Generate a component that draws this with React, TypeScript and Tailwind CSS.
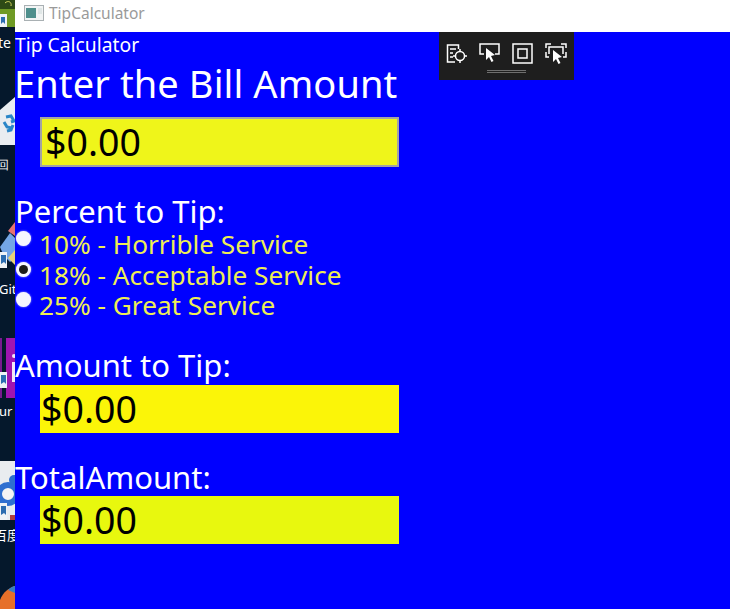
const font = "font-['Noto_Sans','Open_Sans',sans-serif]";

function Radio({ checked, label }: { checked?: boolean; label: string }) {
  return (
    <div className="flex h-[30.5px] items-start">
      <div className="mt-[1px] ml-[1px] flex h-[15px] w-[15px] shrink-0 items-center justify-center rounded-full bg-[#f6f6ff] shadow-[0_0_2px_#c8c8ff]">
        {checked && <div className="h-[9px] w-[9px] rounded-full bg-[#1c1c1c]" />}
      </div>
      <span className="ml-[8px] text-[26.2px] leading-[28px] text-[#eeee55] whitespace-nowrap">{label}</span>
    </div>
  );
}

function Field({ bg, border, h }: { bg: string; border?: boolean; h: string }) {
  return (
    <div className={`ml-[25px] flex w-[359px] items-center ${h} ${bg} ${border ? "border-2 border-[#a3a3a3] pl-[3px]" : "pl-[1px]"}`}>
      <span className="text-[37.5px] leading-none text-black">$0.00</span>
    </div>
  );
}

function Desktop() {
  return (
    <div className="relative h-full w-[15px] shrink-0 overflow-hidden bg-[#05182c] text-white">
      <svg width="15" height="609" viewBox="0 0 15 609" className="absolute left-0 top-0">
        <rect width="15" height="27" fill="#6f9a24" />
        <rect width="15" height="9" fill="#2d4a16" />
        <path d="M5 3c3-3 7-1 6 3" fill="none" stroke="#d8d860" strokeWidth="1" />
        <rect y="14" width="7" height="13" fill="#eef2f6" />
        <path d="M1 17h4v7l-2-2-2 2z" fill="#2b6cb0" />

        <path d="M0 110l15-13v48H0z" fill="#e9edf1" />
        <path d="M6 117l5-1 3 5-3 1M4 122l3 5 5 1M13 125l-2 5-4 1" fill="none" stroke="#2a86c8" strokeWidth="3" />

        <path d="M8 231l7-9v14z" fill="#e57373" />
        <path d="M0 247l10-14 5 5v20l-5 4-6-6z" fill="#74a6e6" />
        <path d="M8 258l7-8v15z" fill="#ead27a" />
        <rect y="252" width="7" height="16" fill="#eef2f6" />
        <path d="M1 255h5v9l-2-2-3 2z" fill="#2b6cb0" />

        <rect y="338" width="2" height="60" fill="#7a1a90" />
        <rect x="6" y="338" width="9" height="60" fill="#a015b0" />
        <rect x="12" y="362" width="3" height="20" fill="#f2e8f6" />
        <circle cx="14" cy="356" r="2" fill="#f2e8f6" />
        <rect y="372" width="7" height="16" fill="#eef2f6" />
        <path d="M1 375h5v9l-2-2-3 2z" fill="#2b6cb0" />

        <rect y="461" width="15" height="59" fill="#e9ecef" />
        <circle cx="8" cy="494" r="9" fill="#f4f4f4" stroke="#2e6fd0" strokeWidth="6" />
        <circle cx="14" cy="480" r="5" fill="#2e6fd0" />
        <rect x="10" y="515" width="5" height="5" fill="#b04040" />
        <rect y="503" width="7" height="17" fill="#eef2f6" />
        <path d="M1 506h5v9l-2-2-3 2z" fill="#2b6cb0" />

        <path d="M0 600c3-8 9-12 15-14v23H0z" fill="#e6702a" />
        <path d="M8 590c3-3 5-4 7-4v7z" fill="#3a7fc0" />
      </svg>
      <span className="absolute left-[-2px] top-[33px] text-[14px] leading-[20px]">te</span>
      <span className="absolute left-[-3px] top-[155px] text-[12px] leading-[20px] whitespace-nowrap">回</span>
      <span className="absolute left-[-1px] top-[279px] text-[13px] leading-[20px]">Git</span>
      <span className="absolute left-[-1px] top-[401px] text-[13px] leading-[20px]">ur</span>
      <span className="absolute left-[-6px] top-[525px] text-[13px] leading-[20px] whitespace-nowrap font-['Noto_Sans_CJK_SC',sans-serif]">百度</span>
    </div>
  );
}

export default function App() {
  return (
    <div className={`relative flex h-[609px] w-[730px] overflow-hidden bg-white ${font}`}>
      <Desktop />
      <div className="flex min-w-0 flex-1 flex-col">
        <div className="flex h-[32px] shrink-0 items-center bg-white pl-[9px]">
          <svg width="20" height="16" viewBox="0 0 20 16" className="mt-[-6px]">
            <rect x="0.5" y="0.5" width="19" height="15" fill="#f2f4f4" stroke="#a9b0b3" />
            <rect x="2" y="3" width="10" height="10" fill="#4f8f8c" />
            <rect x="14" y="3" width="4" height="6" fill="#dfe6e6" />
          </svg>
          <span className="ml-[5px] mt-[-4px] text-[15.5px] text-[#9a9a9a]">TipCalculator</span>
        </div>
        <div className="flex flex-1 flex-col bg-[#0000ff] text-white">
          <div className="h-[25px] text-[19.3px] leading-[25px] whitespace-nowrap">Tip Calculator</div>
          <div className="ml-[-1px] h-[60px] text-[38px] leading-[52px] tracking-[0.1px] whitespace-nowrap">Enter the Bill Amount</div>
          <Field bg="bg-[#eff51a]" border h="h-[50px]" />
          <div className="mt-[26px] h-[37px] text-[31px] leading-[37px] whitespace-nowrap">Percent to Tip:</div>
          <Radio label="10% - Horrible Service" />
          <Radio checked label="18% - Acceptable Service" />
          <Radio label="25% - Great Service" />
          <div className="mt-[25px] h-[38px] text-[31px] leading-[37px] whitespace-nowrap">Amount to Tip:</div>
          <Field bg="bg-[#fbf508]" h="h-[48px]" />
          <div className="mt-[26px] h-[37px] text-[31px] leading-[37px] whitespace-nowrap">TotalAmount:</div>
          <Field bg="bg-[#e8f80e]" h="h-[48px]" />
        </div>
      </div>
      <div className="absolute left-[439px] top-[32px] flex h-[48px] w-[135px] flex-col items-center bg-[#1e1e1e] pt-[9px]">
        <div className="flex h-[24px] items-center gap-[12px] text-white">
          <svg width="21" height="21" viewBox="0 0 21 21" fill="none" stroke="currentColor" strokeWidth="1.5">
            <path d="M9 19H1.5V2h11v4M4 6h6M4 10h3M4 14h3" />
            <circle cx="14" cy="13" r="4.5" />
            <path d="M14 6v3M14 17v3M7 13h3M18 13h3" />
          </svg>
          <svg width="21" height="21" viewBox="0 0 21 21" fill="none" stroke="currentColor" strokeWidth="1.5">
            <path d="M5 11H1V1h19v10h-4" />
            <path d="M7 5l9 7-4 1 2.5 5-2 1-2.5-5-3 3z" fill="currentColor" stroke="none" />
          </svg>
          <svg width="21" height="21" viewBox="0 0 21 21" fill="none" stroke="currentColor" strokeWidth="1.5">
            <rect x="1" y="1" width="19" height="19" />
            <rect x="6" y="6" width="9" height="9" />
          </svg>
          <svg width="22" height="21" viewBox="0 0 22 21" fill="none" stroke="currentColor" strokeWidth="1.5">
            <path d="M1 5V1h5M16 1h5v4M1 9v5h3M21 9v5h-3M4 11V4h14v7" />
            <path d="M8 7l9 7-4 1 2.5 5-2 1-2.5-5-3 3z" fill="currentColor" stroke="none" />
          </svg>
        </div>
        <div className="mt-[5px] h-[3px] w-[39px] border-y border-[#6e6e6e]" />
      </div>
    </div>
  );
}
